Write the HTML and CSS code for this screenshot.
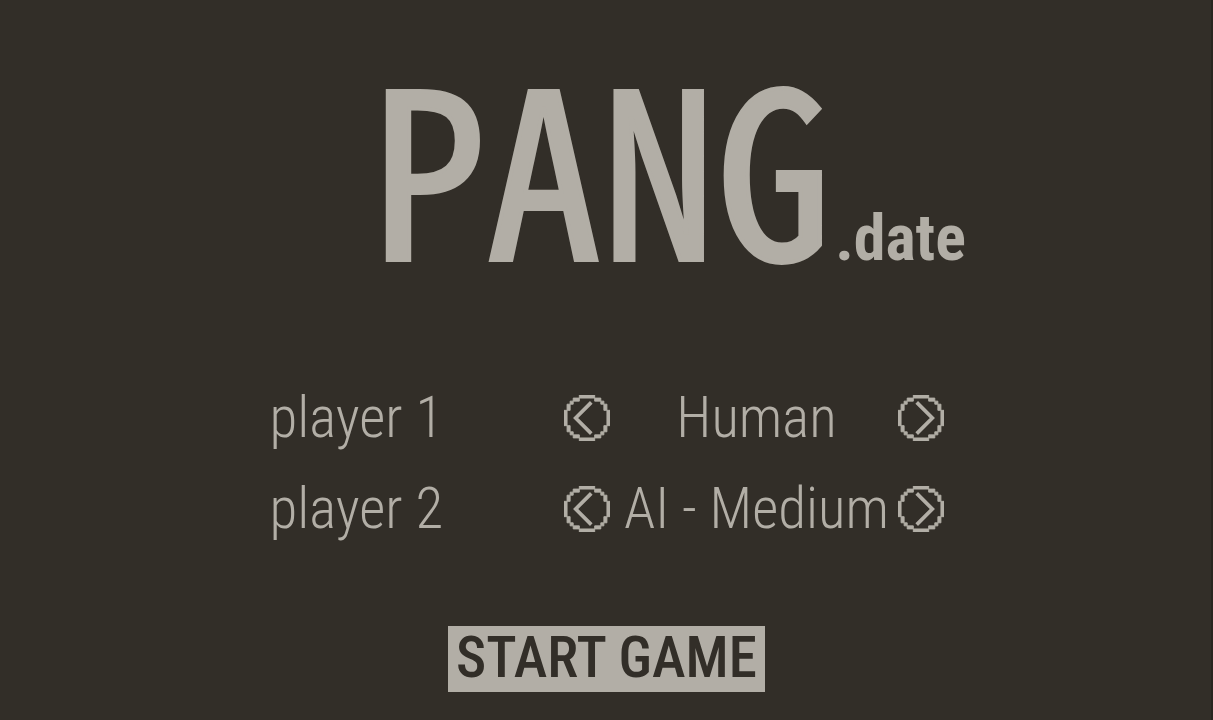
FILE: index.html
```
<!DOCTYPE html>
<html lang="en">
<head>
<meta charset="utf-8">
<title>PANG.date</title>
<link rel="stylesheet" href="styles.css">
</head>
<body>
<svg class="sprites" width="0" height="0" aria-hidden="true">
  <symbol id="arrow-left" viewBox="0 0 15 15">
    <path fill="currentColor" stroke="currentColor" stroke-width="0.3" d="M5 0h5v1h-5zM3 1h2v1h-2zM10 1h2v1h-2zM2 2h1v1h-1zM12 2h1v1h-1zM1 3h1v2h-1zM13 3h1v2h-1zM0 5h1v5h-1zM14 5h1v5h-1zM1 10h1v2h-1zM13 10h1v2h-1zM2 12h1v1h-1zM12 12h1v1h-1zM3 13h2v1h-2zM10 13h2v1h-2zM5 14h5v1h-5z"/>
    <path fill="none" stroke="currentColor" stroke-width="1.2" d="M8.900 2.400L3.800 7.500L8.900 12.600"/>
  </symbol>
</svg>
<main class="menu">
  <h1 class="logo"><span class="logo-name">PANG</span><span class="logo-suffix">.date</span></h1>
  <div class="players">
    <div class="player" role="group" aria-labelledby="p1">
      <span class="player-name" id="p1">player 1</span>
      <div class="picker">
        <button class="arrow" type="button" aria-label="Previous"><svg class="arrow-icon"><use href="#arrow-left"/></svg></button>
        <output class="value">Human</output>
        <button class="arrow" type="button" aria-label="Next"><svg class="arrow-icon arrow-icon-next"><use href="#arrow-left"/></svg></button>
      </div>
    </div>
    <div class="player" role="group" aria-labelledby="p2">
      <span class="player-name" id="p2">player 2</span>
      <div class="picker">
        <button class="arrow" type="button" aria-label="Previous"><svg class="arrow-icon"><use href="#arrow-left"/></svg></button>
        <output class="value">AI - Medium</output>
        <button class="arrow" type="button" aria-label="Next"><svg class="arrow-icon arrow-icon-next"><use href="#arrow-left"/></svg></button>
      </div>
    </div>
  </div>
  <button class="start" type="button">START GAME</button>
</main>
</body>
</html>
```
FILE: styles.css
```
:root {
  --ink: #b2aea6;
  --ground: #322e28;
}
* { box-sizing: border-box; }
body {
  margin: 0;
  background: var(--ground);
  color: var(--ink);
  font-family: "Roboto Condensed", Roboto, sans-serif;
}
.sprites { position: absolute; }
.menu {
  display: flex;
  flex-direction: column;
  align-items: center;
  min-height: 100vh;
  padding: 44px 16px 24px 18px;
  border-right: 2px solid #29251f;
}
.logo {
  display: flex;
  align-items: baseline;
  gap: 4px;
  margin: 0 0 31px 124px;
  line-height: 232px;
}
.logo-name {
  font-family: "Noto Sans CJK JP", sans-serif;
  font-feature-settings: "hwid";
  font-size: 230px;
  font-weight: 400;
  -webkit-text-stroke: 4px var(--ink);
  stroke-linejoin: round;
}
.logo-suffix {
  font-size: 64px;
  font-weight: 700;
}
.players {
  display: grid;
  gap: 27px;
  width: 100%;
  max-width: 674px;
  margin-bottom: 85px;
}
.player {
  display: flex;
  align-items: center;
  justify-content: space-between;
  font-size: 57px;
  font-weight: 300;
  line-height: 64px;
}
.picker {
  display: flex;
  align-items: center;
  width: 380px;
}
.value {
  flex: 1;
  padding-left: 6px;
  text-align: center;
  white-space: nowrap;
}
.arrow {
  width: 46px;
  height: 46px;
  padding: 0;
  border: 0;
  background: none;
  color: inherit;
}
.arrow-icon {
  display: block;
  width: 46px;
  height: 46px;
}
.arrow-icon-next { transform: scaleX(-1); }
.start {
  padding: 0 8px 2px;
  border: 0;
  background: var(--ink);
  color: var(--ground);
  font-family: inherit;
  font-size: 57px;
  font-weight: 500;
  line-height: 64px;
}
```
